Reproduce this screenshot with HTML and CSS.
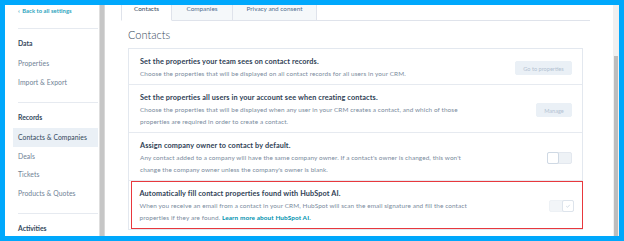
FILE: index.html
```html
<!DOCTYPE html>
<html lang="en">
<head>
<meta charset="utf-8">
<title>Contacts settings</title>
<link rel="stylesheet" href="styles.css">
</head>
<body>
<div class="frame">
  <aside class="sidebar">
    <a class="back"><span class="chev">‹</span> Back to all settings</a>
    <div class="divider"></div>
    <div class="sec-title">Data</div>
    <div class="item">Properties</div>
    <div class="item">Import &amp; Export</div>
    <div class="divider"></div>
    <div class="sec-title">Records</div>
    <div class="item active">Contacts &amp; Companies</div>
    <div class="item">Deals</div>
    <div class="item">Tickets</div>
    <div class="item">Products &amp; Quotes</div>
    <div class="divider"></div>
    <div class="sec-title">Activities</div>
  </aside>
  <div class="side-scroll"></div>
  <main class="main">
    <div class="content">
      <div class="tabs">
        <div class="tab active w1">Contacts</div>
        <div class="tab w2">Companies</div>
        <div class="tab w3">Privacy and consent</div>
      </div>
      <h1 class="heading">Contacts</h1>
      <div class="card">
        <div class="row">
          <div class="text">
            <div class="title">Set the properties your team sees on contact records.</div>
            <div class="desc">Choose the properties that will be displayed on all contact records for all users in your CRM.</div>
          </div>
          <button class="btn w-go">Go to properties</button>
        </div>
        <div class="row">
          <div class="text">
            <div class="title">Set the properties all users in your account see when creating contacts.</div>
            <div class="desc">Choose the properties that will be displayed when any user in your CRM creates a contact, and which of those properties are required in order to create a contact.</div>
          </div>
          <button class="btn w-manage">Manage</button>
        </div>
        <div class="row">
          <div class="text">
            <div class="title">Assign company owner to contact by default.</div>
            <div class="desc">Any contact added to a company will have the same company owner. If a contact's owner is changed, this won't change the company owner unless the company's owner is blank.</div>
          </div>
          <div class="toggle off"><span class="knob"></span></div>
        </div>
        <div class="row highlight">
          <div class="text">
            <div class="title">Automatically fill contact properties found with HubSpot AI.</div>
            <div class="desc">When you receive an email from a contact in your CRM, HubSpot will scan the email signature and fill the contact properties if they are found. <a class="link">Learn more about HubSpot AI.</a></div>
          </div>
          <div class="toggle on"><span class="knob"><svg viewBox="0 0 10 10" width="6" height="6"><path d="M2 5.2 L4.2 7.2 L8 3" fill="none" stroke="#b9c7d6" stroke-width="1"/></svg></span></div>
        </div>
      </div>
    </div>
  </main>
  <div class="scrollbar"><div class="thumb"></div></div>
</div>
</body>
</html>
```
FILE: styles.css
```css
* { box-sizing: border-box; }
html, body { margin: 0; padding: 0; }
body {
  font-family: Lato, "Noto Sans", sans-serif;
  color: #33475b;
  background: #00a8fc;
}
.frame {
  width: 624px;
  height: 241px;
  border: 5px solid #00a8fc;
  background: #fff;
  display: flex;
  overflow: hidden;
}
.sidebar {
  width: 94px;
  flex: none;
  padding: 0 1px 0 13px;
}
.back {
  display: block;
  height: 12px;
  line-height: 12px;
  font-size: 5.8px;
  letter-spacing: 0.05px;
  font-weight: 700;
  color: #2aa3bd;
}
.chev { font-size: 6px; margin-right: 1px; }
.divider {
  height: 1px;
  background: #e6eaf0;
  margin-top: 11px;
}
.sec-title {
  margin-top: 7px;
  margin-bottom: 4px;
  line-height: 14px;
  font-size: 6.8px;
  font-weight: 700;
  color: #33475b;
}
.item {
  height: 18.5px;
  line-height: 18.5px;
  font-size: 6.8px;
  letter-spacing: 0.05px;
  color: #6f8296;
  margin-left: -5px;
  padding-left: 5px;
}
.item.active {
  background: #eaf0f6;
  color: #33475b;
}
.side-scroll {
  width: 6px;
  flex: none;
  background: #c6c6c6;
  border-left: 1px solid #dedede;
  border-right: 1px solid #d8d8d8;
}
.main {
  flex: 1;
  padding-left: 16px;
}
.content { width: 469px; }
.tabs {
  display: flex;
  height: 16px;
  border-bottom: 1px solid #dfe3eb;
}
.tab {
  height: 16px;
  line-height: 8px;
  font-size: 6.4px;
  text-align: center;
  background: #f5f8fa;
  color: #516f90;
  border-right: 1px solid #dfe3eb;
  margin-bottom: -1px;
  border-bottom: 1px solid #dfe3eb;
}
.tab.active {
  background: #fff;
  color: #33475b;
  border-left: 1px solid #dfe3eb;
  border-bottom-color: #fff;
}
.w1 { width: 51px; }
.w2 { width: 61px; }
.w3 { width: 84px; }
.heading {
  margin: 7px 0 6px 7px;
  font-size: 11px;
  line-height: 14px;
  font-weight: 300;
  color: #33475b;
}
.card {
  margin: 0 7px;
  border: 1px solid #e3e8ef;
}
.row {
  display: flex;
  align-items: center;
  padding: 7px 10px 4px 11px;
  border-bottom: 1px solid #e6eaf0;
}
.text { flex: 1; max-width: 336px; }
.title {
  font-size: 7.3px;
  letter-spacing: 0.12px;
  font-weight: 700;
  line-height: 12px;
  color: #2f4155;
}
.desc {
  font-size: 6.4px;
  letter-spacing: 0.1px;
  line-height: 12px;
  color: #7a8b9d;
}
.link { color: #0091ae; font-weight: 700; }
.row .text + * { margin-left: auto; }
.btn {
  height: 14px;
  padding: 0;
  border: 1px solid #eaf0f6;
  background: #eaf0f6;
  border-radius: 2px;
  font-family: Lato, "Noto Sans", sans-serif;
  font-size: 5.6px;
  color: #b3c2d2;
}
.w-go { width: 57px; }
.w-manage { width: 36px; }
.toggle {
  width: 25px;
  height: 12px;
  border-radius: 2px;
  background: #eef2f6;
  border: 1px solid #e3e8ef;
  display: flex;
  flex: none;
}
.knob {
  width: 12px;
  height: 12px;
  margin: -1px;
  background: #fff;
  border: 1px solid #cfd9e4;
  border-radius: 2px;
  display: flex;
  align-items: center;
  justify-content: center;
}
.toggle.on { justify-content: flex-end; background: #f2f5f8; border-color: #edf1f5; }
.toggle.on .knob { border-color: #dde4ec; }
.row.highlight {
  border: 1.5px solid #e8383d;
  margin-left: 2px;
  margin-right: -1px;
  padding: 6px 8.5px 4px 7.5px;
}
.scrollbar {
  width: 6px;
  flex: none;
  background: #f0f0f0;
  padding-top: 51px;
}
.thumb {
  height: 100%;
  margin: 0 1px;
  background: #bdbdbd;
}
```
